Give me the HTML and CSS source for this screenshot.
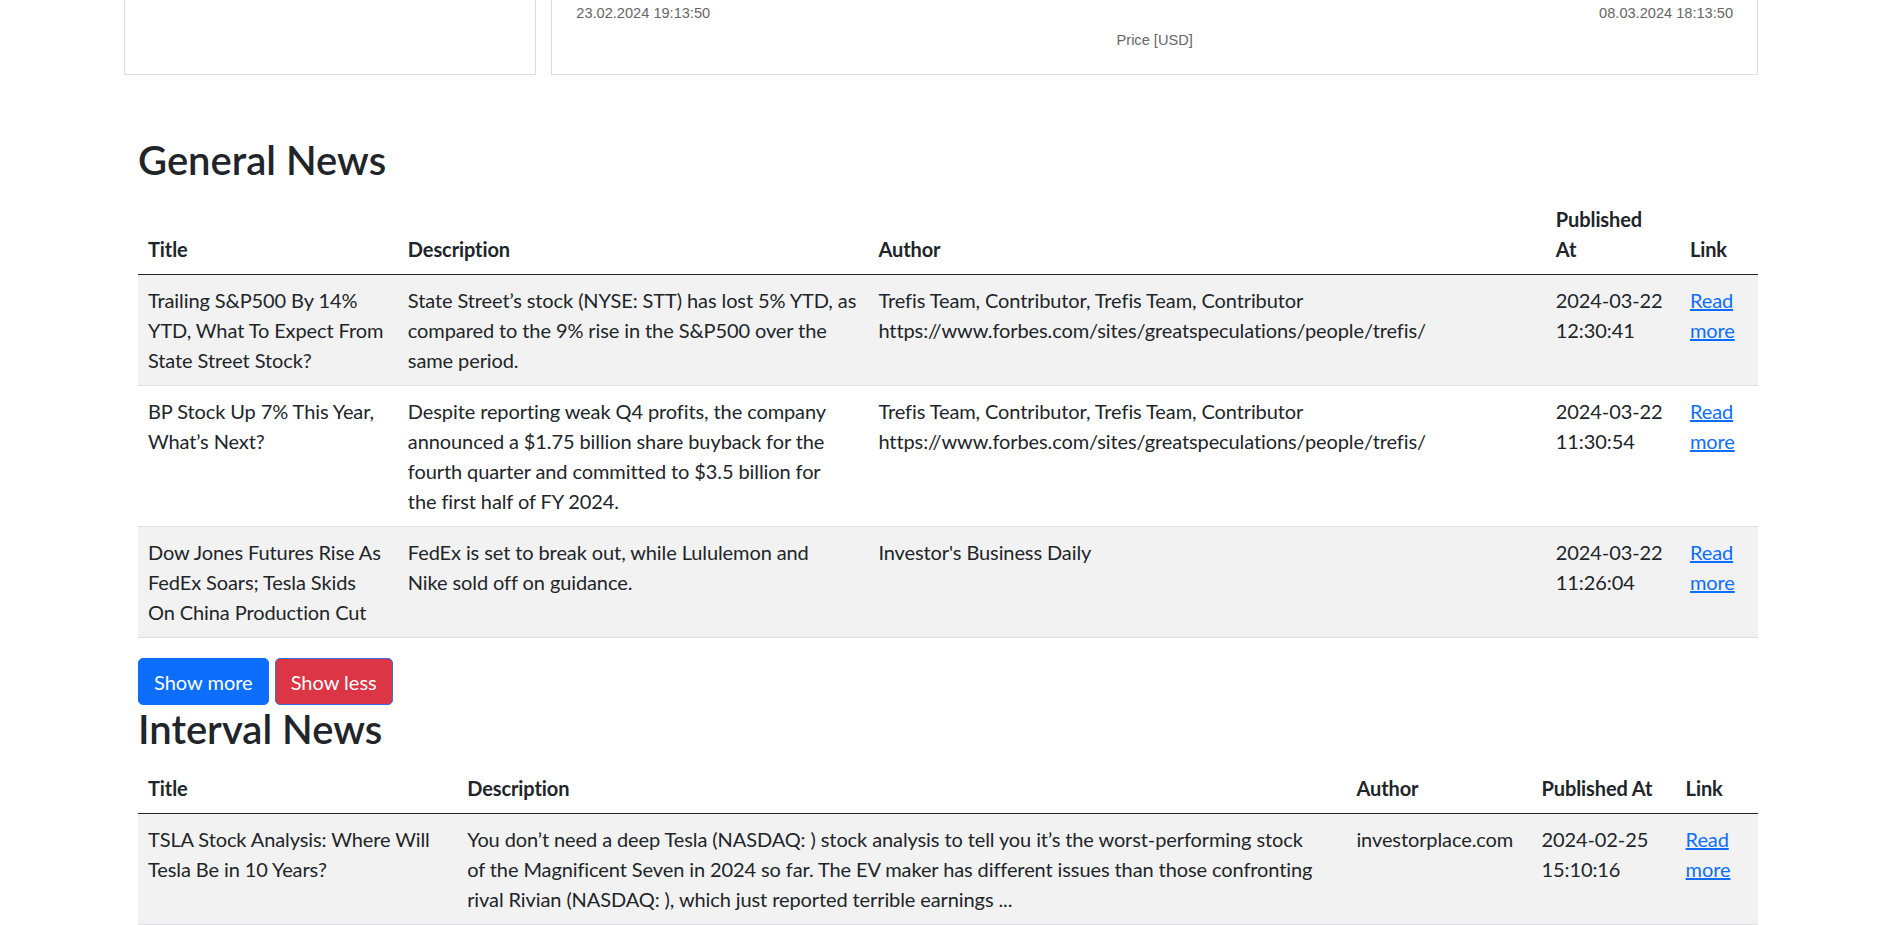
FILE: index.html
```html
<!DOCTYPE html>
<html lang="en">
<head>
<meta charset="utf-8">
<title>Stock News</title>
<link rel="stylesheet" href="styles.css">
</head>
<body>
<div class="container">
  <div class="charts">
    <div class="card card-small"></div>
    <div class="card card-chart">
      <div class="axis-dates"><span>23.02.2024 19:13:50</span><span>08.03.2024 18:13:50</span></div>
      <div class="axis-title">Price [USD]</div>
    </div>
  </div>

  <section class="news news-general">
    <h2>General News</h2>
    <table class="table">
      <colgroup>
        <col class="g-title"><col class="g-desc"><col class="g-author"><col class="g-pub"><col class="g-link">
      </colgroup>
      <thead>
        <tr><th>Title</th><th>Description</th><th>Author</th><th class="th-pub">Published At</th><th>Link</th></tr>
      </thead>
      <tbody>
        <tr class="striped">
          <td>Trailing S&amp;P500 By 14% YTD, What To Expect From State Street Stock?</td>
          <td>State Street’s stock (NYSE: STT) has lost 5% YTD, as compared to the 9% rise in the S&amp;P500 over the same period.</td>
          <td>Trefis Team, Contributor, Trefis Team, Contributor https://www.forbes.com/sites/greatspeculations/people/trefis/</td>
          <td>2024-03-22 12:30:41</td>
          <td><a href="#">Read more</a></td>
        </tr>
        <tr>
          <td>BP Stock Up 7% This Year, What’s Next?</td>
          <td>Despite reporting weak Q4 profits, the company announced a $1.75 billion share buyback for the fourth quarter and committed to $3.5 billion for<br>the first half of FY 2024.</td>
          <td>Trefis Team, Contributor, Trefis Team, Contributor https://www.forbes.com/sites/greatspeculations/people/trefis/</td>
          <td>2024-03-22 11:30:54</td>
          <td><a href="#">Read more</a></td>
        </tr>
        <tr class="striped">
          <td>Dow Jones Futures Rise As FedEx Soars; Tesla Skids<br>On China Production Cut</td>
          <td>FedEx is set to break out, while Lululemon and<br>Nike sold off on guidance.</td>
          <td>Investor's Business Daily</td>
          <td>2024-03-22 11:26:04</td>
          <td><a href="#">Read more</a></td>
        </tr>
      </tbody>
    </table>
    <div class="actions">
      <button class="btn btn-primary" type="button">Show more</button>
      <button class="btn btn-danger" type="button">Show less</button>
    </div>
  </section>

  <section class="news news-interval">
    <h2>Interval News</h2>
    <table class="table">
      <colgroup>
        <col class="i-title"><col class="i-desc"><col class="i-author"><col class="i-pub"><col class="i-link">
      </colgroup>
      <thead>
        <tr><th>Title</th><th>Description</th><th>Author</th><th>Published At</th><th>Link</th></tr>
      </thead>
      <tbody>
        <tr class="striped">
          <td>TSLA Stock Analysis: Where Will Tesla Be in 10 Years?</td>
          <td>You don’t need a deep Tesla (NASDAQ: ) stock analysis to tell you it’s the worst-performing stock<br>of the Magnificent Seven in 2024 so far. The EV maker has different issues than those confronting<br>rival Rivian (NASDAQ: ), which just reported terrible earnings ...</td>
          <td>investorplace.com</td>
          <td>2024-02-25 15:10:16</td>
          <td><a href="#">Read more</a></td>
        </tr>
      </tbody>
    </table>
  </section>
</div>
</body>
</html>
```
FILE: styles.css
```css
html, body {
  margin: 0;
  padding: 0;
  background: #fff;
}
body {
  font-family: Lato, "Noto Sans", sans-serif;
  font-size: 20px;
  line-height: 30px;
  color: #212529;
  letter-spacing: -0.1px;
}
.container {
  width: 1650px;
  margin: 0 auto;
  padding: 0 15px;
  box-sizing: border-box;
}

/* chart cards (scrolled, only bottom visible) */
.charts {
  display: flex;
  gap: 15.6px;
  margin-left: -13.7px;
}
.card {
  height: 75px;
  box-sizing: border-box;
  border: 1px solid #dfdfdf;
  border-top: none;
  background: #fff;
}
.card-small { width: 411.4px; flex: none; }
.card-chart { flex: 1; }
.axis-dates {
  display: flex;
  justify-content: space-between;
  padding: 5px 24px 0 24px;
  font-family: "Liberation Sans", Arial, sans-serif;
  font-size: 14.6px;
  line-height: 17px;
  letter-spacing: 0;
  color: #666;
}
.axis-title {
  margin-top: 10px;
  text-align: center;
  font-family: "Liberation Sans", Arial, sans-serif;
  font-size: 14.6px;
  line-height: 17px;
  letter-spacing: 0;
  color: #666;
}

/* news */
h2 {
  margin: 0 0 10px;
  font-size: 40px;
  line-height: 48px;
  font-weight: 600;
  letter-spacing: 0;
}
.news-general { margin-top: 61px; }

.table {
  width: 100%;
  border-collapse: collapse;
  table-layout: fixed;
  margin-bottom: 20px;
}
.table th, .table td {
  padding: 10px;
  text-align: left;
  vertical-align: bottom;
  border-bottom: 1px solid #dee2e6;
}
.table td { vertical-align: top; }
.table thead th {
  font-weight: 700;
  border-bottom: 1px solid #212529;
}
.table .th-pub { padding-right: 30px; }
.table tr.striped td { background: #f2f2f2; }
.table a { color: #0d6efd; text-decoration: underline; }

.g-title { width: 259.7px; }
.g-desc { width: 470.3px; }
.g-author { width: 677px; }
.g-pub { width: 134px; }
.g-link { width: 78px; }

.i-title { width: 319px; }
.i-desc { width: 888.7px; }
.i-author { width: 185px; }
.i-pub { width: 144px; }
.i-link { width: 82.3px; }

.actions {
  display: flex;
  gap: 6px;
}
.btn {
  font-family: inherit;
  font-size: 20px;
  line-height: 30px;
  padding: 7.5px 15px;
  border: 1px solid transparent;
  border-radius: 5px;
  color: #fff;
  cursor: pointer;
  letter-spacing: 0;
}
.btn-primary { background: #0d6efd; border-color: #0d6efd; }
.btn-danger { background: #dc3545; border-color: #2f6fe8; }
```
